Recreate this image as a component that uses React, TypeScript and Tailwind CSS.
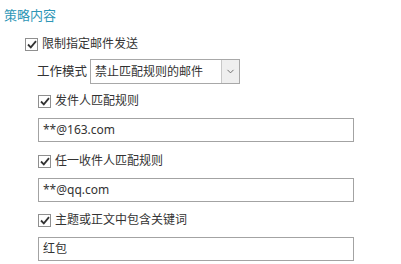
import { ChevronDown } from "lucide-react";

function CheckBox() {
  return (
    <span className="flex h-[13px] w-[13px] shrink-0 items-center justify-center border border-[#8f8f8f] bg-white">
      <svg width="10" height="9" viewBox="0 0 10 9" fill="none">
        <path d="M1 4.5 L3.8 7.3 L9 1.2" stroke="#333" strokeWidth="1.8" />
      </svg>
    </span>
  );
}

function CheckRow({ label }: { label: string }) {
  return (
    <div className="flex h-[20px] items-center gap-[4px]">
      <CheckBox />
      <span>{label}</span>
    </div>
  );
}

function TextBox({ value }: { value: string }) {
  return (
    <div className="flex h-[24px] w-[316px] items-center border border-[#a3a3a3] bg-white pl-[4px]">
      {value}
    </div>
  );
}

export default function App() {
  return (
    <div
      className="h-[264px] w-[401px] overflow-hidden bg-white text-[12px] leading-[16px] text-[#333]"
      style={{ fontFamily: '"Noto Sans", "Noto Sans CJK SC", sans-serif' }}
    >
      <div className="pl-[4px] pt-[7px] text-[13px] text-[#2e96b6]">策略内容</div>

      <div className="pl-[25px]">
        <div className="mt-[11px]">
          <CheckRow label="限制指定邮件发送" />
        </div>

        <div className="mt-[5px] flex items-center pl-[12px]">
          <span className="w-[53px] text-[12.5px]">工作模式</span>
          <div className="flex h-[25px] w-[150px] border border-[#a8a8a8] bg-white">
            <div className="flex flex-1 items-center pl-[4px]">禁止匹配规则的邮件</div>
            <div className="flex w-[18px] items-center justify-center border-l border-[#c8c8c8] bg-[#efefef]">
              <ChevronDown size={11} strokeWidth={2} className="text-[#666]" />
            </div>
          </div>
        </div>

        <div className="pl-[13px]">
          <div className="mt-[7px]">
            <CheckRow label="发件人匹配规则" />
          </div>
          <div className="mt-[7px]">
            <TextBox value="**@163.com" />
          </div>

          <div className="mt-[9px]">
            <CheckRow label="任一收件人匹配规则" />
          </div>
          <div className="mt-[7px]">
            <TextBox value="**@qq.com" />
          </div>

          <div className="mt-[8px]">
            <CheckRow label="主题或正文中包含关键词" />
          </div>
          <div className="mt-[7px]">
            <TextBox value="红包" />
          </div>
        </div>
      </div>
    </div>
  );
}
